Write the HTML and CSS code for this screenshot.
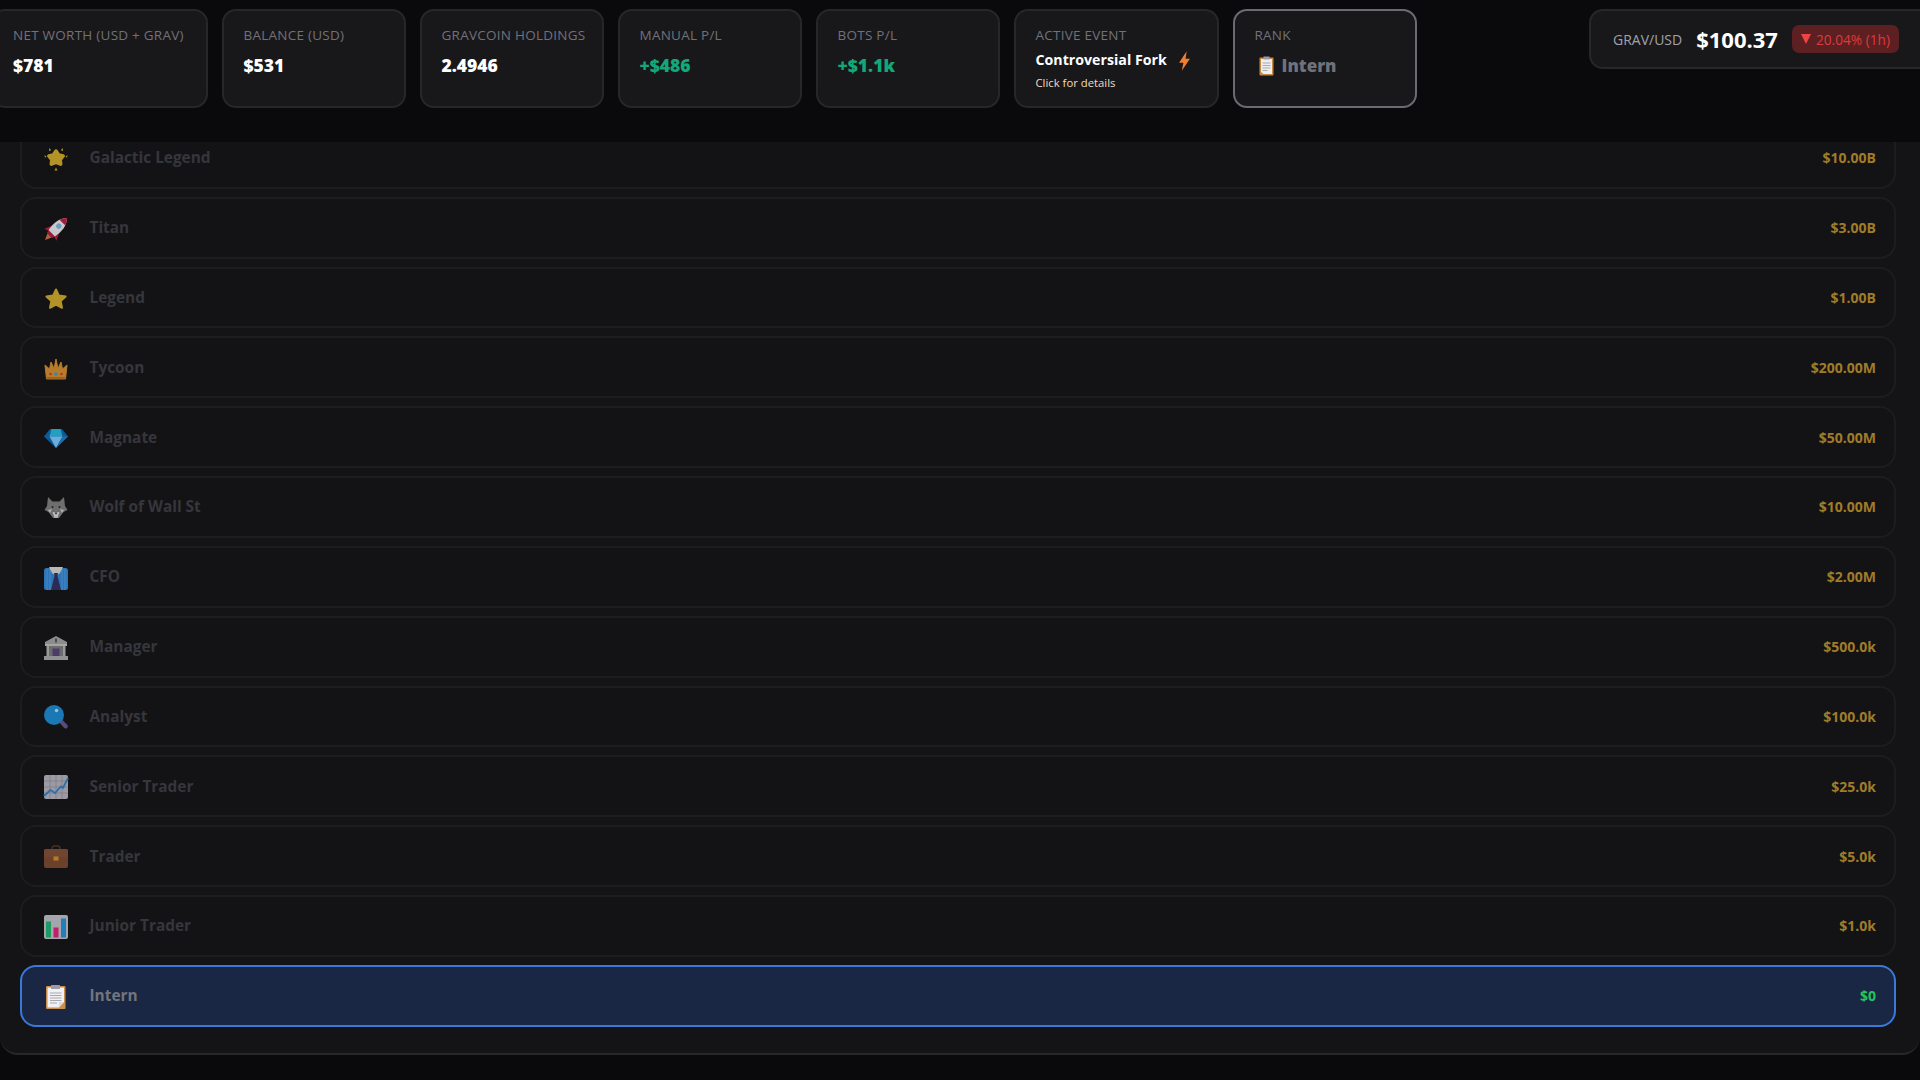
FILE: index.html
```html
<!DOCTYPE html>
<html lang="en">
<head>
<meta charset="utf-8">
<title>Rank</title>
<link rel="stylesheet" href="styles.css">
</head>
<body>
<header class="topbar">
  <div class="card card--net"><div class="card-label">Net Worth (USD + GRAV)</div><div class="card-value">$781</div></div>
  <div class="card"><div class="card-label">Balance (USD)</div><div class="card-value">$531</div></div>
  <div class="card"><div class="card-label">GravCoin Holdings</div><div class="card-value">2.4946</div></div>
  <div class="card"><div class="card-label">Manual P/L</div><div class="card-value card-value--up">+$486</div></div>
  <div class="card"><div class="card-label">Bots P/L</div><div class="card-value card-value--up">+$1.1k</div></div>
  <div class="card card--event">
    <div class="card-label">Active Event</div>
    <div class="event-name">Controversial Fork
      <svg class="bolt" viewBox="0 0 12 18"><path d="M8 0 1 10.500h4L3.500 18l7.500-11H7z" fill="#f08030"/></svg>
    </div>
    <div class="event-hint">Click for details</div>
  </div>
  <div class="card card--rank">
    <div class="card-label">Rank</div>
    <div class="rank-value">
      <svg class="rank-icon" viewBox="0 0 16 20"><rect x="1" y="1.500" width="14" height="18" rx="1" fill="#c48a45"/><path d="M2.500 3h11v15H5l-2.500-2z" fill="#eeedf0"/><rect x="5" y="0.500" width="6" height="3" fill="#9a9aa0"/><path d="M4 7h8M4 9.500h8M4 12h8M4 14.500h5" stroke="#a9a9af"/></svg>
      Intern
    </div>
  </div>
  <div class="ticker">
    <span class="ticker-label">GRAV/USD</span>
    <span class="ticker-price">$100.37</span>
    <span class="ticker-badge"><span class="ticker-arrow"></span>20.04% (1h)</span>
  </div>
</header>

<main class="panel">
  <div class="rank-list">
    <div class="row">
      <svg class="icon" viewBox="0 0 24 24"><path d="M12 4l2.700 4 4.500 1-3 3.600.5 4.600-4.700-1.900-4.700 1.900.5-4.600-3-3.600 4.500-1z" fill="#b39327" stroke="#b39327" stroke-width="3.500" stroke-linejoin="round"/><path d="M5 1l2.200 2-1.900 1.200zM19 1l-2.200 2 1.900 1.200zM.2 8.500l2.200.5-1 1.700zM23.800 8.500l-2.200.5 1 1.700zM12 20.500l1.500 3h-3z" fill="#b39327"/></svg>
      <span class="row-name">Galactic Legend</span><span class="row-value">$10.00B</span>
    </div>
    <div class="row">
      <svg class="icon" viewBox="0 0 24 24"><g transform="rotate(45 12 12)"><path d="M9 21h6l-3 6.500z" fill="#b8603a"/><path d="M7.500 11 3.500 20l5-1.500zM16.500 11l4 9-5-1.500z" fill="#9c1b3a"/><rect x="8" y="17" width="8" height="4" fill="#9c1b3a"/><path d="M12-3.500C17.500 2 18 10 16.500 18h-9C6 10 6.500 2 12-3.500z" fill="#c9c9cc"/><path d="M12-3.500C13.900-1.600 15.100.7 15.800 3H8.200C8.900.7 10.100-1.600 12-3.500z" fill="#a3193d"/><circle cx="12" cy="8" r="2.700" fill="#6f9fc0"/></g></svg>
      <span class="row-name">Titan</span><span class="row-value">$3.00B</span>
    </div>
    <div class="row">
      <svg class="icon" viewBox="0 0 24 24"><path d="M12 2.500l2.900 6.100 6.700.9-4.900 4.600 1.300 6.700-6-3.300-6 3.300 1.300-6.700-4.900-4.600 6.700-.9z" fill="#b39327" stroke="#b39327" stroke-width="2" stroke-linejoin="round"/></svg>
      <span class="row-name">Legend</span><span class="row-value">$1.00B</span>
    </div>
    <div class="row">
      <svg class="icon" viewBox="0 0 24 24"><path d="M2.500 23 1 9l4.500 4L7 6l3 6.500L12 3l2 9.500L17 6l1.500 7L23 9l-1.500 14z" fill="#b87a2c" stroke="#b87a2c" stroke-linejoin="round"/><rect x="2.500" y="21" width="19" height="2" fill="#9a6424"/><circle cx="12" cy="18" r="1.800" fill="#2a8fa8"/><circle cx="6.500" cy="18" r="1.200" fill="#a33b1e"/><circle cx="17.500" cy="18" r="1.200" fill="#a33b1e"/></svg>
      <span class="row-name">Tycoon</span><span class="row-value">$200.00M</span>
    </div>
    <div class="row">
      <svg class="icon" viewBox="0 0 24 24"><path d="M6 3h12l6 7.500L12 22 0 10.500z" fill="#0e5a98"/><path d="M7.500 3h9l2 7.500h-13z" fill="#21a0bf"/><path d="M5.500 10.500h13L12 22z" fill="#6aaedc"/><path d="M18.500 10.500h5.500L12 22z" fill="#1a6fb0"/></svg>
      <span class="row-name">Magnate</span><span class="row-value">$50.00M</span>
    </div>
    <div class="row">
      <svg class="icon" viewBox="0 0 24 24"><path d="M4 1l4.500 4.500h7L20 1l1 9 2.500 4-4 2-4.500 6h-6l-4.500-6-4-2L3 10z" fill="#6e6e6e"/><path d="M8 13l-4 1 2 3zM16 13l4 1-2 3z" fill="#b0b0b0"/><path d="M8.500 16h7L13.500 22h-3z" fill="#b8b8b8"/><circle cx="8.500" cy="11" r="1" fill="#222"/><circle cx="15.500" cy="11" r="1" fill="#222"/><path d="M10.500 16.500h3L12 18.500z" fill="#222"/></svg>
      <span class="row-name">Wolf of Wall St</span><span class="row-value">$10.00M</span>
    </div>
    <div class="row">
      <svg class="icon" viewBox="0 0 24 24"><rect y="2" width="24" height="22" rx="2.500" fill="#2f74b5"/><path d="M3 3v21M6 3v21M18 3v21M21 3v21" stroke="#4a8fcc" stroke-width=".8"/><path d="M5 1h14l-3 6-4 3-4-3z" fill="#b8b8b8"/><path d="M10 7h4l-.5 3 3.500 14H7l3.500-14z" fill="#2b2b55"/></svg>
      <span class="row-name">CFO</span><span class="row-value">$2.00M</span>
    </div>
    <div class="row">
      <svg class="icon" viewBox="0 0 24 24"><path d="M12 0 23 6v2H1V6z" fill="#8c8c8c"/><rect x="1" y="8" width="22" height="2" fill="#a5a5a5"/><path d="M2.500 10h2.500v10H2.500zM7 10h2v10H7zM15 10h2v10h-2zM19 10h2.500v10H19z" fill="#999"/><rect x="5" y="10" width="14" height="10" fill="#6c6c6c"/><rect x="8.500" y="12.500" width="7" height="7.500" fill="#4a3c6a"/><rect y="20" width="24" height="4" fill="#929292"/><rect x="11.200" y="2.500" width="1.600" height="4" fill="#3c3c48"/></svg>
      <span class="row-name">Manager</span><span class="row-value">$500.0k</span>
    </div>
    <div class="row">
      <svg class="icon" viewBox="0 0 24 24"><path d="M14 16l3-2.500 6.200 6.300c.9 1 .8 2.400-.1 3.200-.9.800-2.300.7-3.100-.2z" fill="#5a4a7a"/><circle cx="10" cy="10" r="10" fill="#1a78b5"/><circle cx="12.500" cy="5.500" r="1.700" fill="#8cc8dc"/></svg>
      <span class="row-name">Analyst</span><span class="row-value">$100.0k</span>
    </div>
    <div class="row">
      <svg class="icon" viewBox="0 0 24 24"><rect width="24" height="24" rx="2" fill="#9c9ba5"/><path d="M6 0v24M12 0v24M18 0v24M0 6h24M0 12h24M0 18h24" stroke="#7e7e87" stroke-width=".8"/><path d="M0 21l6.500-6 4.500 3 6-6.500 2 1.500L24 3" fill="none" stroke="#2f6fa8" stroke-width="1.800"/></svg>
      <span class="row-name">Senior Trader</span><span class="row-value">$25.0k</span>
    </div>
    <div class="row">
      <svg class="icon" viewBox="0 0 24 24"><path d="M8 5V3.500C8 2 9 1 10.500 1h3C15 1 16 2 16 3.500V5" fill="none" stroke="#4a3020" stroke-width="1.300"/><rect y="4" width="24" height="19" rx="2" fill="#6b4229"/><rect y="4" width="24" height="8" rx="2" fill="#704630"/><rect x="9.500" y="11.500" width="5" height="4" fill="#b87a2c"/></svg>
      <span class="row-name">Trader</span><span class="row-value">$5.0k</span>
    </div>
    <div class="row">
      <svg class="icon" viewBox="0 0 24 24"><rect width="24" height="24" rx="2" fill="#a5a5ad"/><rect x="2" y="6.500" width="5" height="16" fill="#1f9a63"/><rect x="9.500" y="12.500" width="5" height="10" fill="#c01f6a"/><rect x="17" y="3.500" width="5" height="19" fill="#1f80b8"/></svg>
      <span class="row-name">Junior Trader</span><span class="row-value">$1.0k</span>
    </div>
    <div class="row row--current">
      <svg class="icon" viewBox="0 0 24 24"><rect x="2" y="1" width="19.500" height="23" rx="1" fill="#c98f4a"/><path d="M3.500 2.500h16.500V17l-5 5.500H3.500z" fill="#f1f0f4"/><path d="M15 22.500V17h5z" fill="#d9d7dc"/><rect x="7" y="0" width="9" height="4" rx=".5" fill="#9c9ca2"/><path d="M6 8h11.500M6 10.500h11.500M6 13h11.500M6 15.500h11.500M6 18h7" stroke="#a9a9af"/></svg>
      <span class="row-name">Intern</span><span class="row-value">$0</span>
    </div>
  </div>
</main>
</body>
</html>
```

FILE: styles.css
```css
* { box-sizing: border-box; }

html, body {
  margin: 0;
  height: 100%;
  overflow: hidden;
  background: #0a0a0c;
  font-family: "Open Sans", "Noto Sans", sans-serif;
}

.topbar {
  display: flex;
  align-items: flex-start;
  gap: 13.500px;
  height: 142px;
  padding-top: 9px;
  margin-left: -9px;
  background: #0a0a0c;
}

.card {
  flex: none;
  width: 184.500px;
  height: 99px;
  padding: 15px 20px;
  background: #18181b;
  border: 2px solid #27272a;
  border-radius: 14px;
}
.card--net { width: 217px; }
.card--event { width: 205.500px; }
.card--rank { border-color: #6b6b72; }

.card-label {
  font-size: 13.500px;
  line-height: 19px;
  letter-spacing: .25px;
  text-transform: uppercase;
  color: #71717a;
  white-space: nowrap;
}

.card-value {
  margin-top: 8px;
  font-size: 17.500px;
  line-height: 24px;
  font-weight: 800;
  color: #fff;
}
.card-value--up { color: #12a877; }

.event-name {
  display: flex;
  align-items: center;
  margin-top: 4px;
  font-size: 14.200px;
  line-height: 22px;
  font-weight: 700;
  color: #fff;
  white-space: nowrap;
}
.bolt { width: 13px; height: 20px; margin: 2px 0 0 11px; }
.event-hint {
  margin-top: 4px;
  font-size: 11.300px;
  line-height: 16px;
  color: #f3dcbc;
  white-space: nowrap;
}

.rank-value {
  display: flex;
  align-items: center;
  gap: 7px;
  margin-top: 9px;
  padding-left: 3px;
  font-size: 17px;
  line-height: 24px;
  font-weight: 800;
  color: #71717a;
}
.rank-icon { width: 17px; height: 20px; }

.ticker {
  flex: none;
  display: flex;
  align-items: center;
  width: 360px;
  height: 60px;
  margin-left: 158.500px;
  padding-left: 22px;
  background: #18181b;
  border: 2px solid #27272a;
  border-radius: 14px;
}
.ticker-label { font-size: 14px; font-weight: 500; color: #a1a1aa; }
.ticker-price { margin-left: 14px; font-size: 22px; font-weight: 700; color: #fff; }
.ticker-badge {
  display: flex;
  align-items: center;
  height: 28px;
  margin-left: 14px;
  padding: 0 9px;
  font-size: 13.700px;
  color: #dc3b3b;
  background: #5c1f22;
  border-radius: 7px;
}
.ticker-arrow {
  width: 0;
  height: 0;
  margin-right: 5px;
  border-left: 5.500px solid transparent;
  border-right: 5.500px solid transparent;
  border-top: 10px solid #ef4444;
}

.panel {
  height: 913px;
  padding: 0 24px 0 20px;
  overflow: hidden;
  background: #141416;
  border-bottom: 2px solid #27272a;
  border-radius: 0 0 18px 18px;
}

.rank-list {
  display: flex;
  flex-direction: column;
  gap: 8px;
  margin-top: -15px;
}

.row {
  display: flex;
  align-items: center;
  height: 61.820px;
  padding: 0 18px 0 22px;
  background: #131315;
  border: 2px solid #1d1d20;
  border-radius: 16px;
}
.row--current {
  background: #1a2744;
  border-color: #3b78d8;
}

.icon {
  flex: none;
  width: 24px;
  height: 24px;
  margin-top: 2px;
  overflow: visible;
}

.row-name {
  flex: 1;
  margin-left: 21.500px;
  font-size: 15.400px;
  font-weight: 700;
  color: #36363c;
}
.row--current .row-name { color: #74747c; }

.row-value {
  font-size: 14px;
  font-weight: 700;
  color: #a07c28;
}
.row--current .row-value { color: #22c55e; }
```
